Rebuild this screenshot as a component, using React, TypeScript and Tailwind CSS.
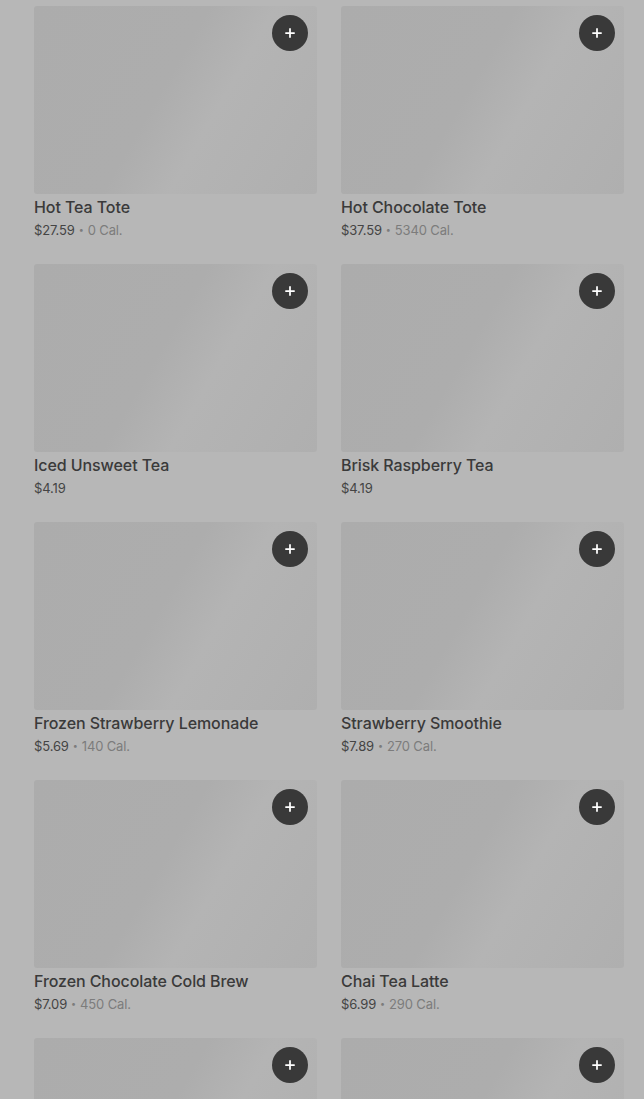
import { Plus } from 'lucide-react';

type Item = { name: string; price: string; cal?: string };

const items: Item[] = [
  { name: 'Hot Tea Tote', price: '$27.59', cal: '0 Cal.' },
  { name: 'Hot Chocolate Tote', price: '$37.59', cal: '5340 Cal.' },
  { name: 'Iced Unsweet Tea', price: '$4.19' },
  { name: 'Brisk Raspberry Tea', price: '$4.19' },
  { name: 'Frozen Strawberry Lemonade', price: '$5.69', cal: '140 Cal.' },
  { name: 'Strawberry Smoothie', price: '$7.89', cal: '270 Cal.' },
  { name: 'Frozen Chocolate Cold Brew', price: '$7.09', cal: '450 Cal.' },
  { name: 'Chai Tea Latte', price: '$6.99', cal: '290 Cal.' },
  { name: 'Caramel Iced Coffee', price: '$5.49', cal: '260 Cal.' },
  { name: 'Vanilla Iced Coffee', price: '$5.49', cal: '250 Cal.' },
];

function MenuCard({ item }: { item: Item }) {
  return (
    <div className="flex flex-col">
      <div className="relative h-[188px] rounded-[3px] bg-[linear-gradient(120deg,#acacac_0%,#adadad_45%,#b4b4b4_62%,#afafaf_100%)]">
        <button
          type="button"
          className="absolute right-[9px] top-[9px] flex h-9 w-9 items-center justify-center rounded-full bg-[#393939] text-white"
        >
          <Plus className="h-[14px] w-[14px]" strokeWidth={3} />
        </button>
      </div>
      <div className="mt-[3px] text-[16px] font-medium leading-[20px] tracking-[-0.005em] text-[#3a3a3a]">
        {item.name}
      </div>
      <div className="mt-[4px] flex items-center text-[13px] leading-[18px] tracking-[-0.01em]">
        <span className="text-[#444]">{item.price}</span>
        {item.cal && (
          <>
            <span className="mx-[4px] text-[9px] text-[#7c7c7c]">•</span>
            <span className="text-[#7c7c7c]">{item.cal}</span>
          </>
        )}
      </div>
    </div>
  );
}

export default function App() {
  return (
    <div className="h-[1099px] overflow-hidden bg-[#b7b7b7] font-['Inter',sans-serif]">
      <div className="grid grid-cols-2 gap-x-6 gap-y-[25px] pl-[34px] pr-5 pt-[6px]">
        {items.map((item) => (
          <MenuCard key={item.name} item={item} />
        ))}
      </div>
    </div>
  );
}
